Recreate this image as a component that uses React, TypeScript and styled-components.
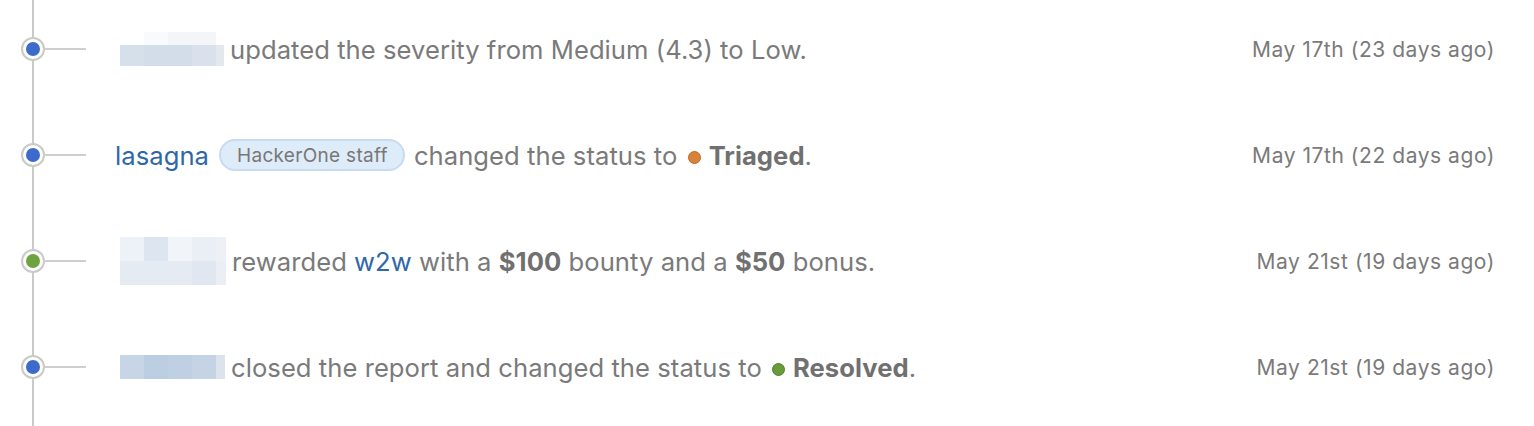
import * as React from "react";
import styled, { createGlobalStyle } from "styled-components";

const GlobalStyle = createGlobalStyle`
  html, body {
    margin: 0;
    padding: 0;
    background: #ffffff;
  }
  body {
    font-family: Inter, "Liberation Sans", Arial, sans-serif;
    -webkit-font-smoothing: antialiased;
  }
`;

type Tone = "blue" | "green";
type Status = "orange" | "green";

interface MosaicRow {
  height: number;
  cells: (string | null)[];
}

interface Activity {
  id: number;
  tone: Tone;
  actor: React.ReactNode;
  body: React.ReactNode;
  date: string;
}

const CELL_WIDTHS = [24, 24, 24, 24];

const Mosaic: React.FC<{ rows: MosaicRow[]; last: number }> = ({ rows, last }) => (
  <MosaicWrap>
    {rows.map((row, i) => (
      <MosaicLine key={i} style={{ height: row.height }}>
        {row.cells.map((c, j) => (
          <MosaicCell
            key={j}
            style={{
              width: j < CELL_WIDTHS.length ? CELL_WIDTHS[j] : last,
              background: c || "transparent",
            }}
          />
        ))}
      </MosaicLine>
    ))}
  </MosaicWrap>
);

// built lazily, the styled parts live further down the file
const buildActivities = (): Activity[] => [
  {
    id: 1,
    tone: "blue",
    actor: (
      <Mosaic
        last={8}
        rows={[
          { height: 13, cells: [null, "#f8fafb", "#f3f5f8", "#f3f5f8", null] },
          { height: 21, cells: ["#d6e0eb", "#d2dde9", "#d3dde9", "#dae1ec", "#e3e8ee"] },
        ]}
      />
    ),
    body: <>updated the severity from Medium (4.3) to Low.</>,
    date: "May 17th (23 days ago)",
  },
  {
    id: 2,
    tone: "blue",
    actor: (
      <>
        <UserLink actor>lasagna</UserLink>
        <Badge>HackerOne staff</Badge>
      </>
    ),
    body: (
      <>
        changed the status to <StatusDot status="orange" /><Strong>Triaged</Strong>.
      </>
    ),
    date: "May 17th (22 days ago)",
  },
  {
    id: 3,
    tone: "green",
    actor: (
      <Mosaic
        last={10}
        rows={[
          { height: 24, cells: ["#edf2f8", "#dde6f0", "#f1f5f9", "#eaeff5", "#edf1f6"] },
          { height: 24, cells: ["#e4ebf3", "#e4ebf3", "#e6ebf3", "#e0e7f0", "#ebeff4"] },
        ]}
      />
    ),
    body: (
      <>
        rewarded <UserLink>w2w</UserLink> with a <Strong>$100</Strong> bounty and a{" "}
        <Strong>$50</Strong> bonus.
      </>
    ),
    date: "May 21st (19 days ago)",
  },
  {
    id: 4,
    tone: "blue",
    actor: (
      <Mosaic
        last={9}
        rows={[{ height: 24, cells: ["#c7d6e6", "#bccfe2", "#bfd0e2", "#c4d4e5", "#dde3ea"] }]}
      />
    ),
    body: (
      <>
        closed the report and changed the status to <StatusDot status="green" />
        <Strong>Resolved</Strong>.
      </>
    ),
    date: "May 21st (19 days ago)",
  },
];

export default function App() {
  const activities = buildActivities();
  return (
    <>
      <GlobalStyle />
      <Timeline>
        {activities.map((a) => (
          <Item key={a.id}>
            <Marker>
              <Node>
                <Dot tone={a.tone} />
              </Node>
              <Connector />
            </Marker>
            <Content>
              {a.actor}
              <Text>{a.body}</Text>
            </Content>
            <When>{a.date}</When>
          </Item>
        ))}
      </Timeline>
    </>
  );
}

const Timeline = styled.div`
  display: flex;
  flex-direction: column;
  min-height: 430px;
  padding: 0 39px 0 21px;
  margin-top: -4px;
  background: linear-gradient(
      to right,
      transparent 32px,
      #cacaca 32px,
      #cacaca 34px,
      transparent 34px
    )
    no-repeat;
  box-sizing: border-box;
`;

const Item = styled.div`
  display: flex;
  align-items: center;
  height: 106px;
`;

const Marker = styled.div`
  display: flex;
  align-items: center;
  flex: none;
`;

const Node = styled.div`
  display: flex;
  align-items: center;
  justify-content: center;
  width: 24px;
  height: 24px;
  border: 2px solid #c9c9c9;
  border-radius: 50%;
  background: #ffffff;
  box-sizing: border-box;
`;

const Dot = styled.div<{ tone: Tone }>`
  width: 14px;
  height: 14px;
  border-radius: 50%;
  background: ${(p) => (p.tone === "green" ? "#6ea43f" : "#3d6bcc")};
`;

const Connector = styled.div`
  width: 41px;
  height: 2px;
  background: #cfcfcf;
`;

const Content = styled.div`
  display: flex;
  align-items: center;
  flex: 1;
  padding-left: 29px;
  font-size: 25.6px;
  letter-spacing: 0.05px;
  color: #7a7a7a;
  white-space: nowrap;
`;

const MosaicWrap = styled.div`
  display: flex;
  flex-direction: column;
  margin: 0 6px 0 5px;
`;

const MosaicLine = styled.div`
  display: flex;
`;

const MosaicCell = styled.div`
  height: 100%;
`;

const Text = styled.span`
  color: #7a7a7a;
`;

const UserLink = styled.span<{ actor?: boolean }>`
  color: #2e68a8;
  cursor: pointer;
  ${(p) => p.actor && `margin-right: 10px;`}
`;

const Badge = styled.span`
  display: inline-flex;
  align-items: center;
  height: 32px;
  padding: 0 15px 0 16px;
  margin-right: 9px;
  border: 2px solid #c6dbf1;
  border-radius: 16px;
  background: #deebf8;
  color: #777777;
  font-size: 19px;
  letter-spacing: 0.3px;
  box-sizing: border-box;
`;

const StatusDot = styled.span<{ status: Status }>`
  display: inline-block;
  width: 13px;
  height: 13px;
  margin: 0 8px 0 3px;
  border-radius: 50%;
  vertical-align: 1px;
  box-sizing: border-box;
  background: ${(p) => (p.status === "orange" ? "#d9833a" : "#6a9a3c")};
  border: 1px solid ${(p) => (p.status === "orange" ? "#b9692b" : "#50802a")};
`;

const Strong = styled.strong`
  font-weight: 700;
  color: #707070;
`;

const When = styled.div`
  flex: none;
  font-size: 21px;
  letter-spacing: 0.55px;
  color: #7a7a7a;
  white-space: nowrap;
`;
